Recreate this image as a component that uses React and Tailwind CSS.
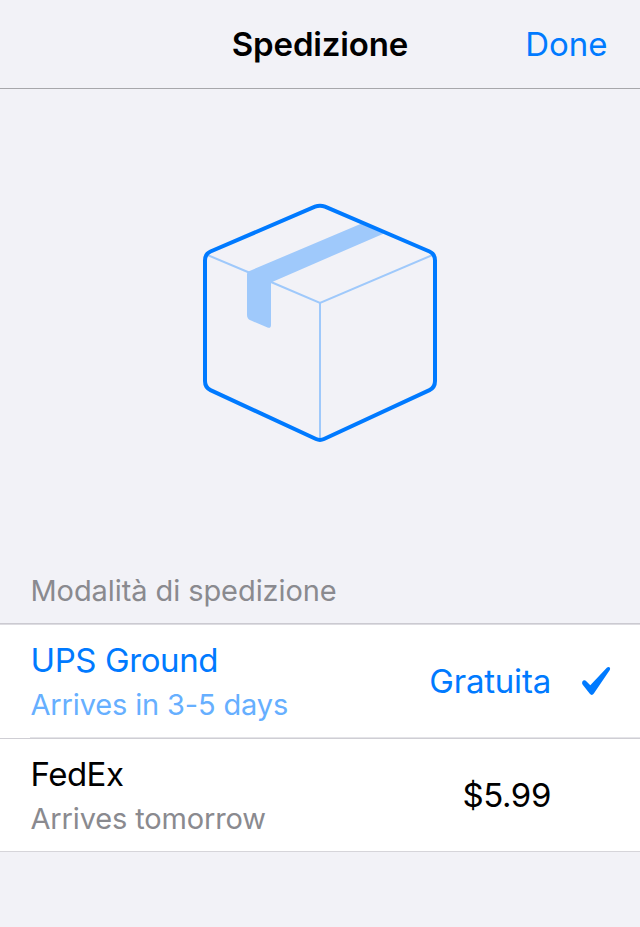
const options = [
  {
    name: "UPS Ground",
    detail: "Arrives in 3-5 days",
    price: "Gratuita",
    selected: true,
    nameTracking: "tracking-[-0.4px]",
    detailTracking: "tracking-[-0.15px]",
    priceTracking: "tracking-[-0.2px]",
  },
  {
    name: "FedEx",
    detail: "Arrives tomorrow",
    price: "$5.99",
    selected: false,
    nameTracking: "tracking-[-0.5px]",
    detailTracking: "tracking-[-0.14px]",
    priceTracking: "tracking-[-0.4px]",
  },
];

function PackageIcon() {
  return (
    <svg className="mt-[111px] h-[246px] w-[240px]" viewBox="200 200 240 246" fill="none">
      <path
        d="M249 271.2 L361 223.7 L384 233.4 L271 282.4 V325 Q271 328.8 267.5 327.5 L250.5 320.3 Q247 318.8 247 315 V274 Q247 272 249 271.2 Z"
        fill="#9fc9fb"
      />
      <path d="M207 254.8 L249 272.5 M271 282 L320 302.8 L433 254.8 M320 302.8 V439" stroke="#9fc9fb" strokeWidth="2" />
      <path
        d="M315 206.7 Q320 204.7 325 206.7 L429.5 251.5 Q435 254 435 260.5 V381 Q435 387.500 429.5 390.1 L324 439 Q320 440.9 316 439 L210.5 390.1 Q205 387.5 205 381 V260.5 Q205 254 210.5 251.5 Z"
        stroke="#007aff"
        strokeWidth="4"
      />
    </svg>
  );
}

function CheckIcon() {
  return (
    <svg className="h-[30px] w-[30px]" viewBox="0 0 30 30">
      <path
        d="M1.2 16 C1.9 14.100 4.100 13.800 5.300 15.200 L9.300 19.200 L25.800 1.700 C27.700 0.100 30 1.500 28.800 3.900 L13 27.300 C11.500 29.500 10.100 29.500 8.600 27.500 L1.700 18.700 C1.100 17.900 0.900 17 1.200 16 Z"
        fill="#007aff"
      />
    </svg>
  );
}

function OptionRow({ option }) {
  return (
    <div className={`flex h-[112px] pl-[30.5px] ${option.selected ? "text-[#007aff]" : "text-black"}`}>
      <div className="flex-1 pt-[13px]">
        <div className={`text-[33px] leading-[44px] ${option.nameTracking}`}>{option.name}</div>
        <div
          className={`text-[29px] leading-[46px] ${option.detailTracking} ${
            option.selected ? "text-[#66afff]" : "text-[#8a8a8f]"
          }`}
        >
          {option.detail}
        </div>
      </div>
      <div className={`self-center text-[33px] leading-[44px] ${option.priceTracking}`}>{option.price}</div>
      <div className="flex w-[89px] items-center pl-[30px]">{option.selected && <CheckIcon />}</div>
    </div>
  );
}

export default function App() {
  return (
    <div className="flex h-[927px] w-[640px] flex-col overflow-hidden bg-[#f2f2f7] font-['Inter',sans-serif]">
      <header className="grid h-[89px] shrink-0 grid-cols-3 items-center border-b border-[#a7a7ab] px-[32px] pt-[2px]">
        <span />
        <h1 className="text-center text-[33px] font-semibold tracking-[-0.15px] text-black">Spedizione</h1>
        <button className="justify-self-end pr-[0.5px] text-[33px] tracking-[0px] text-[#007aff]">Done</button>
      </header>
      <div className="flex h-[479px] shrink-0 justify-center">
        <PackageIcon />
      </div>
      <h2 className="h-[55px] shrink-0 pl-[30.5px] text-[29px] leading-[45px] tracking-[-0.08px] text-[#8a8a8f]">
        Modalità di spedizione
      </h2>
      <div className="h-px shrink-0 bg-[#cbcad1]" />
      <div className="h-px shrink-0 bg-[#dddce1]" />
      <main className="shrink-0 bg-white">
        <OptionRow option={options[0]} />
        <div className="ml-[30px] h-px bg-[#e4e4e8]" />
        <div className="h-px bg-[#cfced4]" />
        <OptionRow option={options[1]} />
        <div className="h-px bg-[#d6d5da]" />
      </main>
    </div>
  );
}
